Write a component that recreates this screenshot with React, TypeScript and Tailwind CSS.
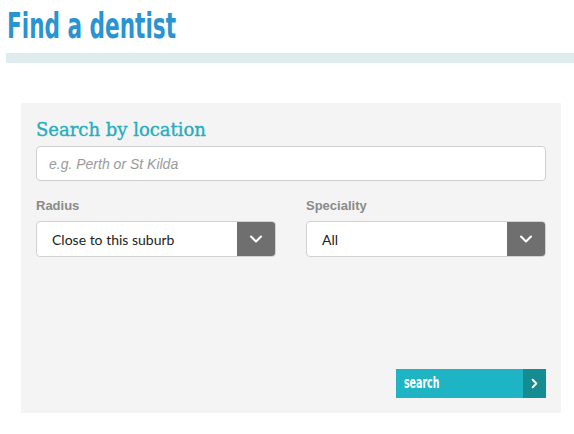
import { ChevronDown, ChevronRight } from "lucide-react";

const selects = [
  { label: "Radius", value: "Close to this suburb" },
  { label: "Speciality", value: "All" },
];

export default function App() {
  return (
    <div className="h-[434px] w-[574px] overflow-hidden bg-white font-['Lato',sans-serif]">
      <h1 className="flex h-[46px] items-center pl-[7px] pt-[6px] text-[36px] leading-[40px]">
        <span className="block origin-left scale-x-[0.6] font-['DejaVu_Sans',sans-serif] font-bold text-[#2a93d1]">
          Find a dentist
        </span>
      </h1>
      <div className="ml-[6px] mt-[7px] h-[10px] bg-[#dfecee]" />

      <div className="ml-[21px] mt-[40px] h-[310px] w-[540px] bg-[#f4f4f4] px-[15px] pt-[15px]">
        <h2 className="font-['DejaVu_Serif',serif] text-[18px] leading-[24px] text-[#25adbf] [-webkit-text-stroke:0.35px_#25adbf]">
          Search by location
        </h2>
        <input
          className="mt-[4px] h-[35px] w-full rounded-[4px] border border-[#cfcfcf] bg-white px-[12px] text-[14px] italic text-gray-600 placeholder:text-[#9a9a9a] font-['Liberation_Sans',sans-serif]"
          placeholder="e.g. Perth or St Kilda"
        />

        <div className="mt-[17px] grid grid-cols-2 gap-[30px]">
          {selects.map(({ label, value }) => (
            <div key={label}>
              <div className="font-['Liberation_Sans',sans-serif] text-[13px] font-bold leading-[16px] text-[#8a8a8a]">
                {label}
              </div>
              <div className="mt-[7px] flex h-[36px] overflow-hidden rounded-[4px] border border-[#d2d2d2] bg-white">
                <div className="flex flex-1 items-center pl-[15px] text-[14px] text-[#222]">
                  {value}
                </div>
                <div className="flex w-[38px] items-center justify-center bg-[#6f6f6f]">
                  <ChevronDown className="h-[20px] w-[20px] text-white" strokeWidth={2.5} />
                </div>
              </div>
            </div>
          ))}
        </div>

        <div className="mt-[112px] flex justify-end">
          <button className="flex h-[29px] w-[150px]">
            <span className="flex flex-1 items-center bg-[#1eb4c4] pl-[8px] text-[15px]">
              <span className="block origin-left scale-x-[0.63] font-['DejaVu_Sans',sans-serif] font-bold text-white">
                search
              </span>
            </span>
            <span className="flex w-[23px] items-center justify-center bg-[#158c92]">
              <ChevronRight className="h-[15px] w-[15px] text-white" strokeWidth={3} />
            </span>
          </button>
        </div>
      </div>
    </div>
  );
}
